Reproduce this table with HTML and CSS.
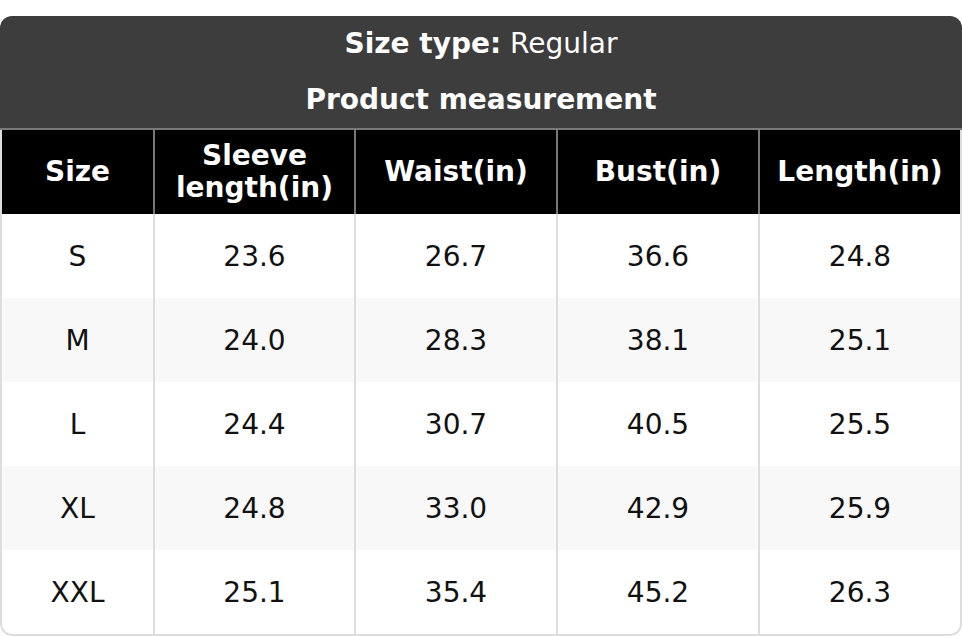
FILE: index.html
```html
<!DOCTYPE html>
<html>
<head>
<meta charset="utf-8">
<link rel="stylesheet" href="styles.css">
</head>
<body>
<div class="chart">
  <div class="caption">
    <div class="line"><b>Size type:</b> Regular</div>
    <div class="line"><b>Product measurement</b></div>
  </div>
  <div class="body">
    <table>
      <colgroup>
        <col class="c1"><col class="c2"><col class="c3"><col class="c4"><col class="c5">
      </colgroup>
      <thead>
        <tr><th>Size</th><th>Sleeve<br>length(in)</th><th>Waist(in)</th><th>Bust(in)</th><th>Length(in)</th></tr>
      </thead>
      <tbody>
        <tr><td>S</td><td>23.6</td><td>26.7</td><td>36.6</td><td>24.8</td></tr>
        <tr><td>M</td><td>24.0</td><td>28.3</td><td>38.1</td><td>25.1</td></tr>
        <tr><td>L</td><td>24.4</td><td>30.7</td><td>40.5</td><td>25.5</td></tr>
        <tr><td>XL</td><td>24.8</td><td>33.0</td><td>42.9</td><td>25.9</td></tr>
        <tr><td>XXL</td><td>25.1</td><td>35.4</td><td>45.2</td><td>26.3</td></tr>
      </tbody>
    </table>
  </div>
</div>
</body>
</html>
```
FILE: styles.css
```css
html, body {
  margin: 0;
  padding: 0;
  background: #fff;
}
body {
  font-family: "DejaVu Sans", "Liberation Sans", sans-serif;
  font-size: 28px;
  color: #111;
}
.chart {
  margin-top: 16px;
  width: 962px;
  border-radius: 12px;
  overflow: hidden;
}
.caption {
  background: #3d3d3d;
  color: #fff;
  text-align: center;
  border-bottom: 2px solid #7a7a7a;
}
.line {
  height: 56px;
  line-height: 56px;
}
.body {
  border: 2px solid #ddd;
  border-top: none;
  border-radius: 0 0 12px 12px;
  overflow: hidden;
}
table {
  width: 100%;
  border-collapse: collapse;
  table-layout: fixed;
}
col.c1 { width: 152px; }
col.c2 { width: 201px; }
col.c3 { width: 202px; }
col.c4 { width: 202px; }
col.c5 { width: 201px; }
th {
  background: #000;
  color: #fff;
  font-weight: bold;
  height: 84px;
  padding: 0;
  line-height: 32px;
  border-left: 2px solid #777;
  box-sizing: border-box;
}
td {
  height: 84px;
  padding: 0;
  text-align: center;
  border-left: 2px solid #ddd;
  box-sizing: border-box;
}
th:first-child, td:first-child {
  border-left: none;
}
tbody tr:nth-child(even) td {
  background: #f8f8f8;
}
```
